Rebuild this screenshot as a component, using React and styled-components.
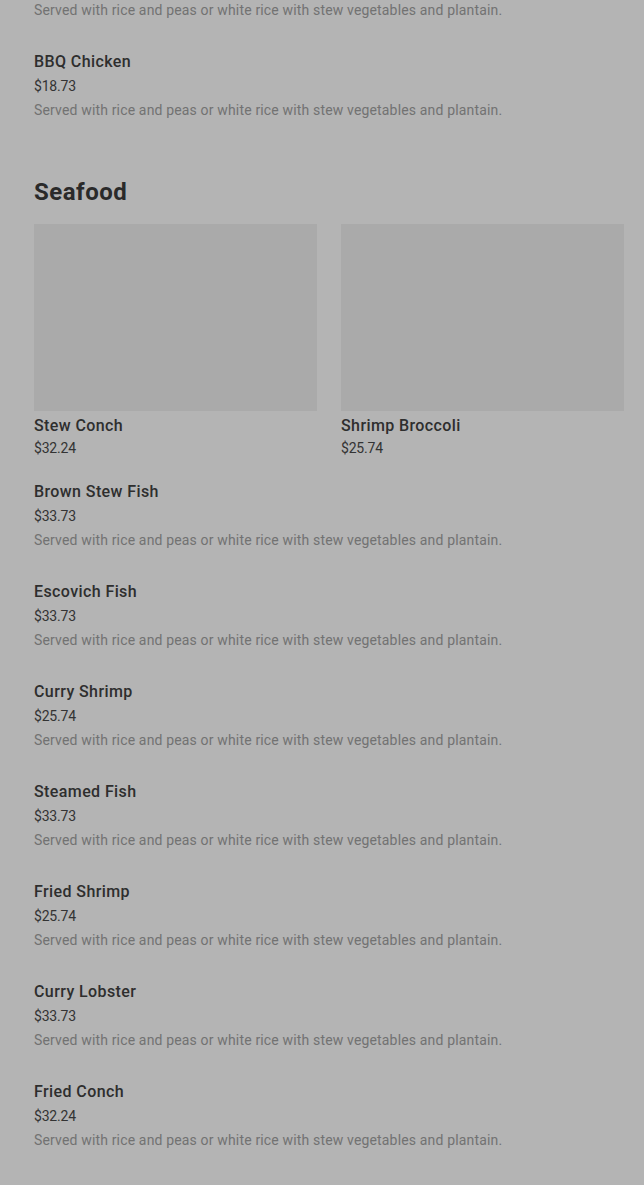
import React from 'react';
import styled, { createGlobalStyle } from 'styled-components';

const items = {
  chicken: [{ name: 'BBQ Chicken', price: '$18.73' }],
  featured: [
    { name: 'Stew Conch', price: '$32.24' },
    { name: 'Shrimp Broccoli', price: '$25.74' },
  ],
  seafood: [
    { name: 'Brown Stew Fish', price: '$33.73' },
    { name: 'Escovich Fish', price: '$33.73' },
    { name: 'Curry Shrimp', price: '$25.74' },
    { name: 'Steamed Fish', price: '$33.73' },
    { name: 'Fried Shrimp', price: '$25.74' },
    { name: 'Curry Lobster', price: '$33.73' },
    { name: 'Fried Conch', price: '$32.24' },
  ],
};

const DESC = 'Served with rice and peas or white rice with stew vegetables and plantain.';

const Menu = () => {
  return (
    <>
      <Global />
      <Page>
        {/* tail of the item scrolled out above */}
        <Tail>{DESC}</Tail>
        <List>
          {items.chicken.map((it) => (
            <Item key={it.name}>
              <Name>{it.name}</Name>
              <Price>{it.price}</Price>
              <Desc>{DESC}</Desc>
            </Item>
          ))}
        </List>

        <Section>
          <Heading>Seafood</Heading>
          <Cards>
            {items.featured.map((it) => (
              <Card key={it.name}>
                <Thumb />
                <CardName>{it.name}</CardName>
                <CardPrice>{it.price}</CardPrice>
              </Card>
            ))}
          </Cards>
          <List>
            {items.seafood.map((it) => (
              <Item key={it.name}>
                <Name>{it.name}</Name>
                <Price>{it.price}</Price>
                <Desc>{DESC}</Desc>
              </Item>
            ))}
          </List>
        </Section>
      </Page>
    </>
  );
};

const Global = createGlobalStyle`
  html, body {
    margin: 0;
    padding: 0;
    background: #b4b4b4;
    overflow: hidden;
  }
  body {
    font-family: Roboto, "Liberation Sans", sans-serif;
    color: #2b2b2b;
  }
`;

const Page = styled.div`
  padding: 0 20px 0 34px;
`;

const List = styled.div`
  display: flex;
  flex-direction: column;
`;

const Item = styled.div`
  padding: 14px 0;
  display: flex;
  flex-direction: column;
`;

const Name = styled.div`
  font-size: 16px;
  font-weight: 500;
  line-height: 24px;
  letter-spacing: 0.4px;
  color: #2e2e2e;
`;

const Price = styled.div`
  font-size: 14px;
  line-height: 24px;
  letter-spacing: -0.2px;
  color: #333;
`;

const Desc = styled.div`
  font-size: 14px;
  line-height: 24px;
  letter-spacing: 0.16px;
  color: #727272;
`;

const Tail = styled(Desc)`
  line-height: 20px;
  padding-bottom: 16px;
`;

const Section = styled.div`
  margin-top: 40px;
`;

const Heading = styled.h2`
  margin: 0 0 16px;
  font-size: 24px;
  line-height: 32px;
  font-weight: 700;
  letter-spacing: 0.5px;
  color: #2a2a2a;
`;

const Cards = styled.div`
  display: grid;
  grid-template-columns: 283px 283px;
  gap: 24px;
  padding-bottom: 7px;
`;

const Card = styled.div`
  display: flex;
  flex-direction: column;
`;

const Thumb = styled.div`
  height: 187px;
  background: #aaaaaa;
  margin-bottom: 4px;
`;

const CardName = styled(Name)`
  line-height: 22px;
`;

const CardPrice = styled(Price)`
  line-height: 22px;
`;

export default Menu;
